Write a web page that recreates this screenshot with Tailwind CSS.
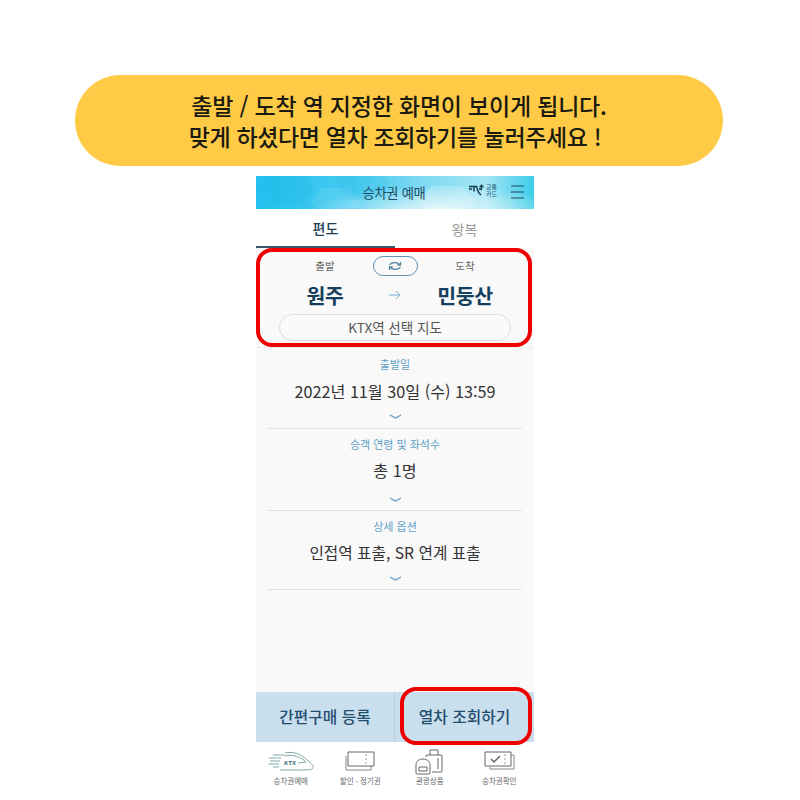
<!DOCTYPE html>
<html lang="ko">
<head>
<meta charset="utf-8">
<script src="https://cdn.jsdelivr.net/npm/@tailwindcss/browser@4"></script>
</head>
<body class="bg-white">
<div class="w-[800px] h-[800px] overflow-hidden flex flex-col font-['Noto_Sans_CJK_KR','Noto_Sans',sans-serif]">
  <div class="mt-[75px] ml-[75px] w-[648px] h-[91px] shrink-0 rounded-[46px] bg-[#ffcb47] flex flex-col items-center justify-center text-[23px] leading-[31px] font-medium text-[#1a1a10] tracking-[-0.2px]">
    <p>출발 / 도착 역 지정한 화면이 보이게 됩니다.</p>
    <p class="mr-[8px] tracking-[-0.35px]">맞게 하셨다면 열차 조회하기를 눌러주세요 !</p>
  </div>

  <div class="relative mt-[10px] ml-[256px] w-[278px] h-[624px] shrink-0 flex flex-col bg-white">
    <header class="relative h-[33px] shrink-0 flex items-center justify-center overflow-hidden bg-[radial-gradient(ellipse_at_66%_100%,#def6fb_0%,transparent_48%),linear-gradient(95deg,#22c0ee_0%,#45caf0_35%,#80daf2_60%,#a4e5f4_82%,#38cbe8_100%)]">
      <svg class="absolute left-0 top-0" width="278" height="33" viewBox="0 0 278 33"><path d="M18 -4h28l12 16-12 16H18L6 12z" fill="#0ea5d8" fill-opacity="0.1"/><path d="M66 12h26l12 14-12 14H66L54 26z" fill="#fff" fill-opacity="0.1"/><path d="M92 -8h30l12 16-12 16H92L80 8z" fill="#0ea5d8" fill-opacity="0.08"/><path d="M176 10h30l14 14-14 14h-30l-14-14z" fill="#fff" fill-opacity="0.2"/></svg>
      <span class="relative ml-[-2px] text-[13.3px] text-[#1d4a63] tracking-[-0.3px]">승차권 예매</span>
      <div class="absolute right-[37px] top-[7px] flex items-center gap-[2px]">
        <svg width="15" height="13" viewBox="0 0 15 13" fill="none" stroke="#12384e" stroke-width="1.4"><path d="M0 2.500h8M5 2.500v5M0 5h3M8 2.500c0 3 1 6 4 8.500M10 5l3 .5M12.500 0.500v4M10.500 2.500h4"/></svg>
        <div class="flex flex-col text-[6px] leading-[7px] text-[#2a5a72]"><span>교통</span><span>카드</span></div>
      </div>
      <svg class="absolute right-[10px] top-[9px]" width="13" height="14" viewBox="0 0 13 14" fill="none" stroke="#1d4a63" stroke-width="1.2"><path d="M0 1h13M0 7h13M0 13h13"/></svg>
    </header>

    <div class="h-[39px] shrink-0 flex">
      <div class="flex-1 flex items-center justify-center pt-[2px] text-[14px] font-medium text-[#1d3f58] border-b-2 border-[#3b5566]">편도</div>
      <div class="flex-1 flex items-center justify-center pt-[2px] text-[14px] text-[#9a9a9a]">왕복</div>
    </div>

    <section class="h-[100px] shrink-0 bg-[#f9f9f9] flex flex-col px-[23px] border-b border-[#ececec]">
      <div class="flex items-center justify-center h-[24px] mt-[6px] text-[10.5px] text-[#666]">
        <span class="w-[70px] text-center">출발</span>
        <div class="w-[70px] flex justify-center">
          <div class="w-[45px] h-[20px] rounded-full border border-[#5d93b8] flex items-center justify-center">
            <svg width="14" height="10" viewBox="0 0 14 10" fill="none" stroke="#4f7f9c" stroke-width="1.2"><path d="M1.500 4C3 1.500 9 0.500 11.500 3.500M12.500 1v3.200H9.300M12.500 6C11 8.500 5 9.500 2.500 6.500M1.500 9V5.800h3.200"/></svg>
          </div>
        </div>
        <span class="w-[70px] text-center">도착</span>
      </div>
      <div class="flex items-center justify-center h-[34px]">
        <span class="w-[70px] text-center text-[20.5px] font-bold text-[#163f5e] tracking-[-0.3px]">원주</span>
        <div class="w-[70px] flex justify-center">
          <svg width="12" height="10" viewBox="0 0 12 10" fill="none" stroke="#7fb0d0" stroke-width="1"><path d="M0 5h11M7 1l4 4-4 4"/></svg>
        </div>
        <span class="w-[70px] text-center text-[20.5px] font-bold text-[#163f5e] tracking-[-0.3px]">민둥산</span>
      </div>
      <div class="mt-[2px] h-[27px] rounded-full border border-[#dcdcdc] bg-[#fafafa] flex items-center justify-center text-[13.5px] text-[#555]">KTX역 선택 지도</div>
    </section>

    <section class="flex-1 bg-[#f9f9f9] px-[12px]">
      <div class="h-[81px] border-b border-[#e2e2e2] flex flex-col items-center">
        <span class="mt-[8px] text-[11px] leading-[16px] text-[#5da0c8]">출발일</span>
        <span class="mt-[7px] text-[16.2px] leading-[24px] text-[#333]">2022년 11월 30일 (수) 13:59</span>
        <svg class="mt-[11px]" width="13" height="5" viewBox="0 0 13 5" fill="none" stroke="#5d9cc4" stroke-width="1.1"><path d="M1 1l5.5 3L12 1"/></svg>
      </div>
      <div class="h-[82px] border-b border-[#e2e2e2] flex flex-col items-center">
        <span class="mt-[7px] text-[11px] leading-[16px] text-[#5da0c8]">승객 연령 및 좌석수</span>
        <span class="mt-[6px] text-[16.2px] leading-[24px] text-[#333]">총 1명</span>
        <svg class="mt-[15px]" width="13" height="5" viewBox="0 0 13 5" fill="none" stroke="#5d9cc4" stroke-width="1.1"><path d="M1 1l5.5 3L12 1"/></svg>
      </div>
      <div class="h-[79px] border-b border-[#e2e2e2] flex flex-col items-center">
        <span class="mt-[7px] text-[11px] leading-[16px] text-[#5da0c8]">상세 옵션</span>
        <span class="mt-[7px] text-[15.7px] leading-[24px] text-[#333]">인접역 표출, SR 연계 표출</span>
        <svg class="mt-[11px]" width="13" height="5" viewBox="0 0 13 5" fill="none" stroke="#5d9cc4" stroke-width="1.1"><path d="M1 1l5.5 3L12 1"/></svg>
      </div>
    </section>

    <div class="h-[50px] shrink-0 flex bg-[#cadfee] text-[15.8px] font-medium text-[#1f4e6e]">
      <div class="w-[139px] flex items-center justify-center border-r border-[#bccfdd]">간편구매 등록</div>
      <div class="flex-1 flex items-center justify-center">열차 조회하기</div>
    </div>

    <nav class="h-[58px] shrink-0 grid grid-cols-4 bg-white text-[7.5px] text-[#666]">
      <div class="flex flex-col items-center">
        <svg class="mt-[9px]" width="48" height="20" viewBox="0 0 48 20" fill="none" stroke="#7fa9a6" stroke-width="1"><path d="M18 2C26 0 34 3 40 9c4 3 7 6 6 8-1 2-6 2-16 2H13"/><path d="M18 5c8-2 16 1 21 6l-8 1"/><path d="M6 4h12M2 7h12M3 10h10M2 13h10M6 16h6"/><text x="17" y="13.500" font-size="6" font-weight="700" font-style="italic" fill="#2f6b78" stroke="none" font-family="Liberation Sans">KTX</text></svg>
        <span class="mt-[5px] leading-[10px]">승차권예매</span>
      </div>
      <div class="flex flex-col items-center">
        <svg class="mt-[9px]" width="32" height="20" viewBox="0 0 32 20" fill="none" stroke="#666" stroke-width="1"><path d="M2 5v14h25v-4" stroke="#888"/><path d="M4 1h26v14H4z" fill="#fff"/><path d="M22 3v11" stroke-dasharray="2 2" stroke="#999"/></svg>
        <span class="mt-[5px] leading-[10px]">할인 · 정기권</span>
      </div>
      <div class="flex flex-col items-center">
        <svg class="mt-[7px]" width="29" height="26" viewBox="0 0 29 26" fill="none" stroke="#666" stroke-width="1"><path d="M11 8V7a1 1 0 0 1 1-1h14a1 1 0 0 1 1 1v15a1 1 0 0 1-1 1h-9"/><path d="M15 6V1h8v5M23 9v11" /><path d="M2 25h12a1 1 0 0 0 1-1v-8c0-8-14-8-14 0v8a1 1 0 0 0 1 1zM4 18h8v4H4z"/></svg>
        <span class="mt-[1px] leading-[10px]">관광상품</span>
      </div>
      <div class="flex flex-col items-center">
        <svg class="mt-[9px]" width="31" height="20" viewBox="0 0 31 20" fill="none" stroke="#666" stroke-width="1"><path d="M27 4h3v14H6v-2" stroke="#888"/><path d="M1 1h26v14H1z" fill="#fff"/><path d="M21 3v11" stroke-dasharray="2 2" stroke="#999"/><path d="M7 8l3 3 6-6" stroke-width="1.500"/></svg>
        <span class="mt-[5px] leading-[10px]">승차권확인</span>
      </div>
    </nav>

    <div class="absolute left-0 top-[72px] w-[276px] h-[99px] rounded-[16px] border-4 border-[#ee0000]"></div>
    <div class="absolute left-[144px] top-[511px] w-[132px] h-[58px] rounded-[16px] border-4 border-[#ee0000]"></div>
  </div>
</div>
</body>
</html>
